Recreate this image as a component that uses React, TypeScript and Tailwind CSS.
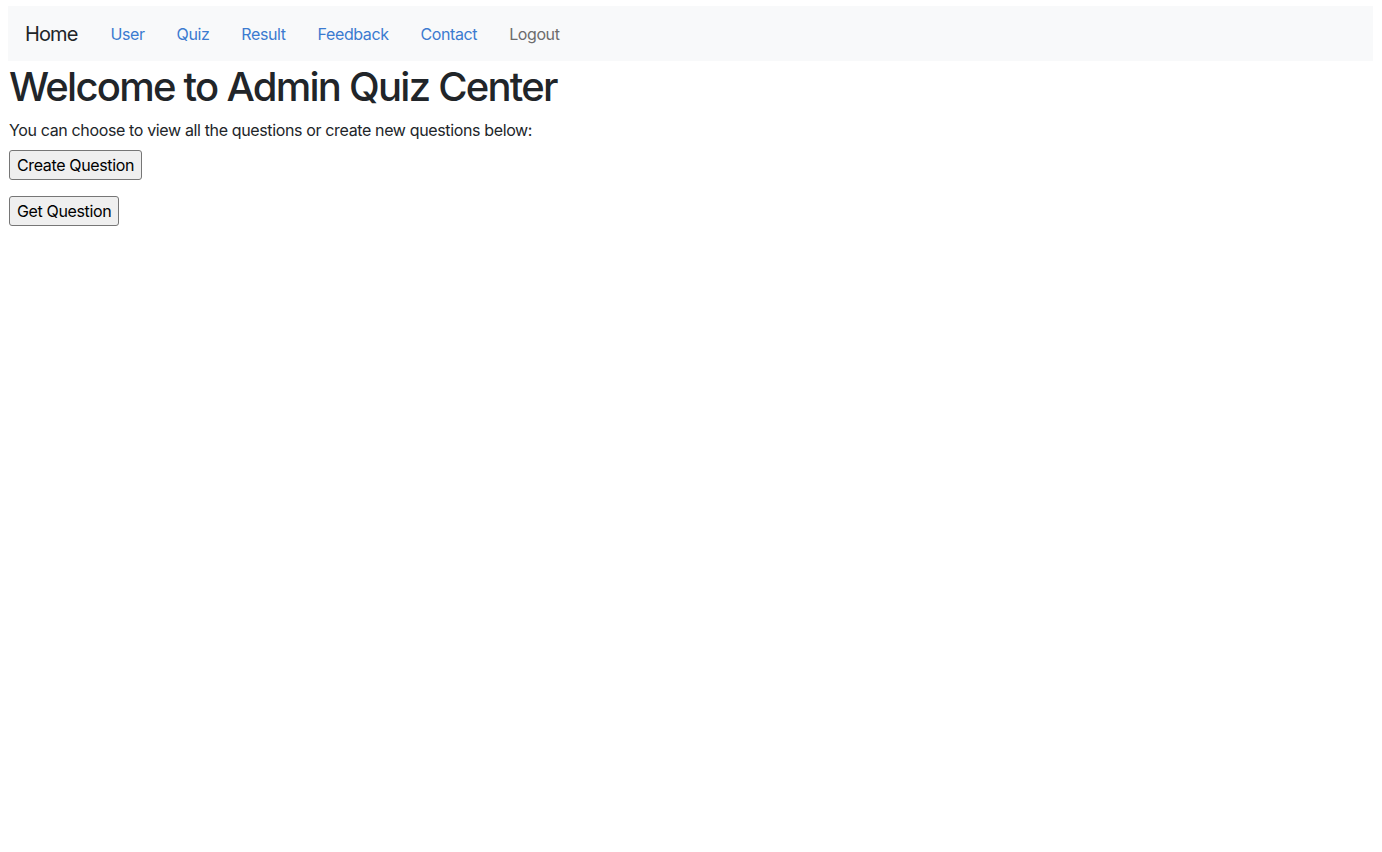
import React from "react";

export default function App() {
  const links = ["User", "Quiz", "Result", "Feedback", "Contact"];
  return (
    <div className="min-h-screen bg-white pt-[6px] pl-[8px] pr-[9px]" style={{ fontFamily: "Inter, 'Noto Sans', sans-serif" }}>
      <nav className="flex h-[55px] items-center bg-[#f8f9fa] pl-[17px]">
        <span className="mr-[33px] text-[20px] tracking-[-0.9px] text-[#212529]">Home</span>
        {links.map((l) => (
          <span key={l} className="mr-[32px] text-[16px] tracking-[-0.4px] text-[#3b7bd0]">
            {l}
          </span>
        ))}
        <span className="text-[16px] tracking-[-0.4px] text-[#6c6c6c]">Logout</span>
      </nav>
      <div className="pl-[1px]">
        <h1 className="mt-[2px] text-[40px] font-medium leading-[48px] tracking-[-1.75px] text-[#212529]">
          Welcome to Admin Quiz Center
        </h1>
        <p className="mt-[7px] text-[16px] leading-[24px] tracking-[-0.36px] text-[#212529]">
          You can choose to view all the questions or create new questions below:
        </p>
        <div className="mt-[8px]">
          <button className="h-[30px] rounded-[3px] border border-[#767676] bg-[#efefef] px-[7px] text-[16px] tracking-[-0.36px] text-black">
            Create Question
          </button>
        </div>
        <div className="mt-[16px]">
          <button className="h-[30px] rounded-[3px] border border-[#767676] bg-[#efefef] px-[7px] text-[16px] tracking-[-0.36px] text-black">
            Get Question
          </button>
        </div>
      </div>
    </div>
  );
}
